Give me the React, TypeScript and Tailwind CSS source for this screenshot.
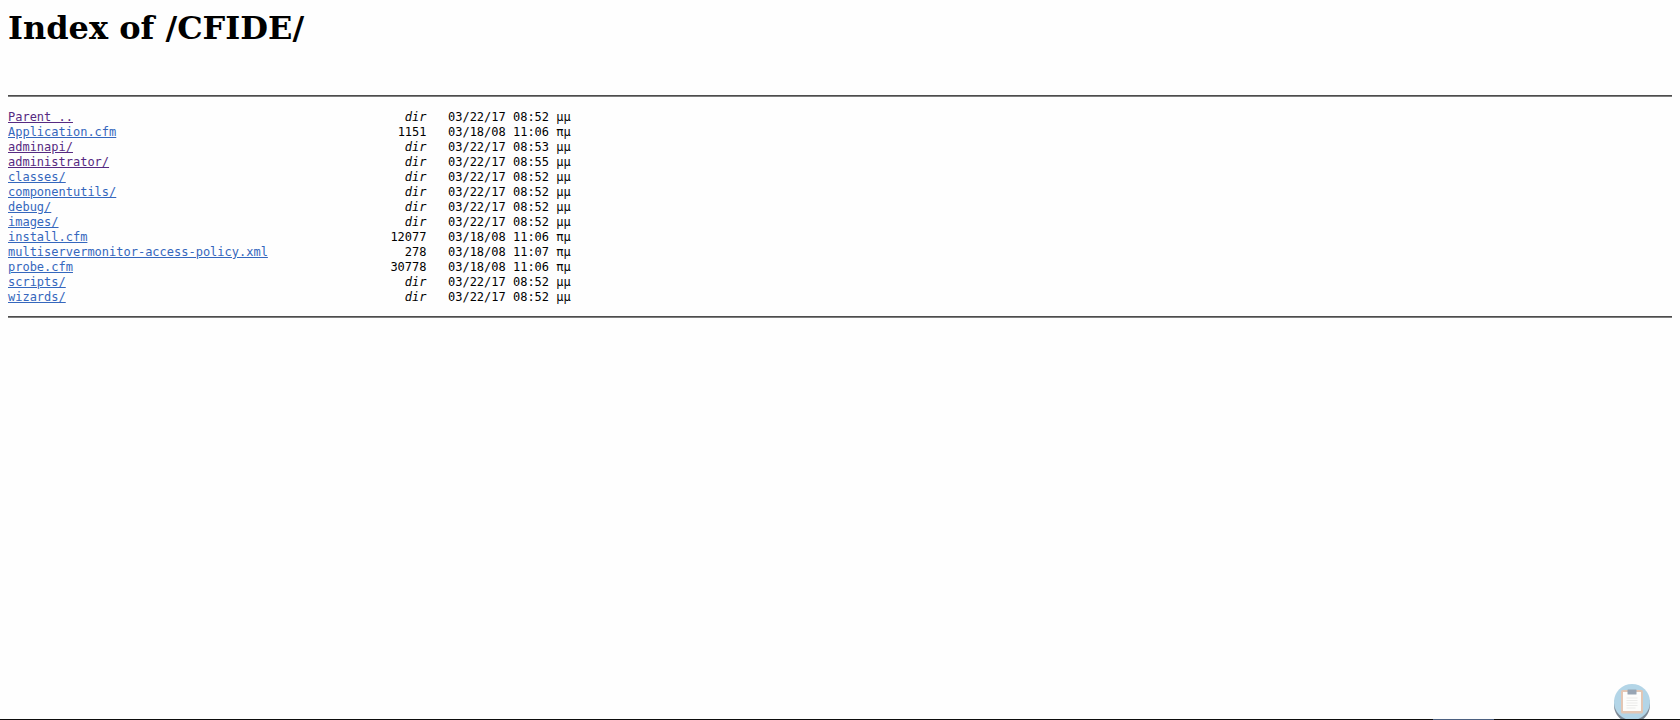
type Entry = {
  name: string;
  size?: number;
  modified: string;
  visited?: boolean;
};

const entries: Entry[] = [
  { name: "Parent ..", modified: "03/22/17 08:52 μμ", visited: true },
  { name: "Application.cfm", size: 1151, modified: "03/18/08 11:06 πμ" },
  { name: "adminapi/", modified: "03/22/17 08:53 μμ", visited: true },
  { name: "administrator/", modified: "03/22/17 08:55 μμ", visited: true },
  { name: "classes/", modified: "03/22/17 08:52 μμ" },
  { name: "componentutils/", modified: "03/22/17 08:52 μμ" },
  { name: "debug/", modified: "03/22/17 08:52 μμ" },
  { name: "images/", modified: "03/22/17 08:52 μμ" },
  { name: "install.cfm", size: 12077, modified: "03/18/08 11:06 πμ" },
  {
    name: "multiservermonitor-access-policy.xml",
    size: 278,
    modified: "03/18/08 11:07 πμ",
  },
  { name: "probe.cfm", size: 30778, modified: "03/18/08 11:06 πμ" },
  { name: "scripts/", modified: "03/22/17 08:52 μμ" },
  { name: "wizards/", modified: "03/22/17 08:52 μμ" },
];

function EntryRow({ entry }: { entry: Entry }) {
  return (
    <li className="flex whitespace-pre">
      <div className="flex w-[418.5px] justify-between">
        <a
          href="#"
          className={
            entry.visited
              ? "text-[#562a82] underline"
              : "text-[#3567bd] underline"
          }
        >
          {entry.name}
        </a>
        {entry.size ? <span>{entry.size}</span> : <i>dir</i>}
      </div>
      <span className="ml-[21.5px]">{entry.modified}</span>
    </li>
  );
}

function Rule() {
  return (
    <div className="h-[2px] border-t border-[#4c4c4c] bg-[#7e7e7e]" />
  );
}

function ClipboardButton() {
  return (
    <svg
      className="absolute right-[30px] bottom-0"
      width="36"
      height="36"
      viewBox="0 0 36 36"
    >
      <circle cx="18" cy="21" r="18" fill="#7f8b97" />
      <circle cx="18" cy="18" r="18" fill="#b3d5e7" />
      <rect x="7" y="6" width="22" height="23.5" rx="1.5" fill="#e3c6b3" />
      <rect x="9" y="8" width="18" height="19" fill="#fdfdfb" />
      <rect x="13.5" y="5.5" width="9" height="5" rx="0.5" fill="#98a5b3" />
      <path
        d="M12.5 14h11M12.5 16.5h11M12.5 19h11M12.5 21.5h11M12.5 24h9"
        stroke="#ebebe9"
        strokeWidth="1"
      />
    </svg>
  );
}

export default function App() {
  return (
    <div className="relative flex h-[720px] flex-col overflow-hidden bg-[#fefefe] text-black">
      <main className="flex-1 px-2">
        <h1 className="mt-[9px] mb-12 font-['DejaVu_Serif',serif] text-[32px] leading-[38px] font-bold">
          Index of /CFIDE/
        </h1>
        <Rule />
        <ul className="mt-[13px] mb-[11px] font-['DejaVu_Sans_Mono',monospace] text-[12px] leading-[15px] tracking-[-0.006px]">
          {entries.map((entry) => (
            <EntryRow key={entry.name} entry={entry} />
          ))}
        </ul>
        <Rule />
      </main>
      <ClipboardButton />
      <div className="relative flex h-px justify-end bg-[#0c0c0c] pr-[186px]">
        <div className="w-[61px] bg-[#4c6080]" />
      </div>
    </div>
  );
}
